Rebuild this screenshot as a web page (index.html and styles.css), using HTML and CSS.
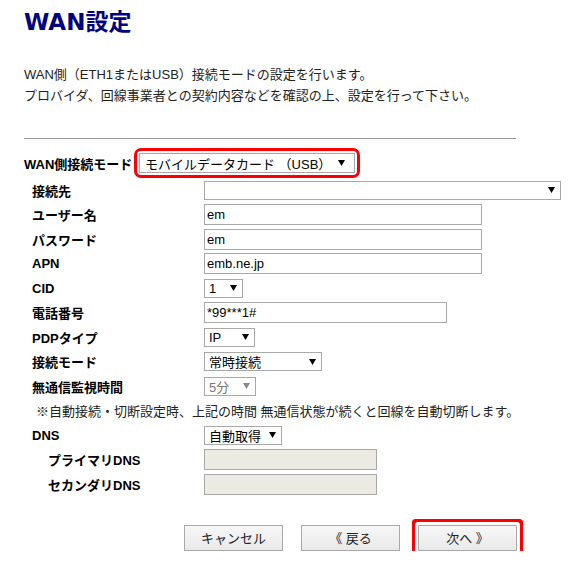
FILE: index.html
```html
<!DOCTYPE html>
<html lang="ja">

<head>
    <meta charset="UTF-8">
    <title>WAN設定</title>
    <link rel="stylesheet" href="styles.css">
</head>

<body>
    <div class="page">
        <h1 class="title">WAN設定</h1>
        <p class="lead">WAN側（ETH1またはUSB）接続モードの設定を行います。<br>プロバイダ、回線事業者との契約内容などを確認の上、設定を行って下さい。</p>
        <hr class="sep">

        <div class="mode-row">
            <span class="mode-label">WAN側接続モード</span>
            <span class="mark">
                <span class="sel sel-mode">モバイルデータカード （USB）<svg class="arr" width="7" height="6" viewBox="0 0 7 6"><path d="M0 0H7L3.5 6Z"/></svg></span>
            </span>
        </div>

        <div class="form">
            <div class="row">
                <span class="lbl">接続先</span>
                <span class="sel w-dest"><svg class="arr" width="7" height="6" viewBox="0 0 7 6"><path d="M0 0H7L3.5 6Z"/></svg></span>
            </div>
            <div class="row">
                <span class="lbl">ユーザー名</span>
                <input class="txt w-long" type="text" value="em">
            </div>
            <div class="row">
                <span class="lbl">パスワード</span>
                <input class="txt w-long" type="text" value="em">
            </div>
            <div class="row">
                <span class="lbl">APN</span>
                <input class="txt w-long" type="text" value="emb.ne.jp">
            </div>
            <div class="row">
                <span class="lbl">CID</span>
                <span class="sel w-cid">1<svg class="arr" width="7" height="6" viewBox="0 0 7 6"><path d="M0 0H7L3.5 6Z"/></svg></span>
            </div>
            <div class="row">
                <span class="lbl">電話番号</span>
                <input class="txt w-tel" type="text" value="*99***1#">
            </div>
            <div class="row">
                <span class="lbl">PDPタイプ</span>
                <span class="sel w-pdp">IP<svg class="arr" width="7" height="6" viewBox="0 0 7 6"><path d="M0 0H7L3.5 6Z"/></svg></span>
            </div>
            <div class="row">
                <span class="lbl">接続モード</span>
                <span class="sel w-conn">常時接続<svg class="arr" width="7" height="6" viewBox="0 0 7 6"><path d="M0 0H7L3.5 6Z"/></svg></span>
            </div>
            <div class="row">
                <span class="lbl">無通信監視時間</span>
                <span class="sel w-idle off">5分<svg class="arr" width="7" height="6" viewBox="0 0 7 6"><path d="M0 0H7L3.5 6Z"/></svg></span>
            </div>
            <div class="row note">※自動接続・切断設定時、上記の時間 無通信状態が続くと回線を自動切断します。</div>
            <div class="row">
                <span class="lbl">DNS</span>
                <span class="sel w-dns">自動取得<svg class="arr" width="7" height="6" viewBox="0 0 7 6"><path d="M0 0H7L3.5 6Z"/></svg></span>
            </div>
            <div class="row">
                <span class="lbl sub">プライマリDNS</span>
                <input class="txt w-ip" type="text" disabled>
            </div>
            <div class="row">
                <span class="lbl sub">セカンダリDNS</span>
                <input class="txt w-ip" type="text" disabled>
            </div>
        </div>

        <div class="buttons">
            <button class="btn">キャンセル</button>
            <button class="btn">《 戻る</button>
            <button class="btn btn-next">次へ 》</button>
        </div>
    </div>
</body>

</html>
```

FILE: styles.css
```css
* {
    margin: 0;
    padding: 0;
    box-sizing: border-box;
}

body {
    background-color: #fff;
    color: #000;
    font-family: "Liberation Sans", "Noto Sans CJK JP", sans-serif;
    font-size: 13px;
}

.page {
    width: 577px;
    padding: 8px 0 0 24px;
}

.title {
    height: 28px;
    line-height: 28px;
    font-family: "DejaVu Sans", "Noto Sans CJK JP", sans-serif;
    font-size: 23px;
    font-weight: bold;
    color: #000080;
}

.lead {
    margin-top: 28px;
    line-height: 21px;
    color: #222;
}

.sep {
    width: 492px;
    height: 1px;
    margin-top: 32px;
    border: none;
    background-color: #999;
}

.mode-row {
    display: flex;
    align-items: center;
    height: 30px;
    margin-top: 9px;
}

.mode-label {
    width: 110px;
    font-weight: bold;
}

.mark {
    display: inline-flex;
    padding: 2px;
    border: 3px solid #f00;
    border-radius: 7px;
}

.sel {
    display: flex;
    align-items: center;
    height: 19px;
    padding: 0 5px 0 4px;
    border: 1px solid #a9a9a9;
    background-color: #fff;
    white-space: nowrap;
}

.sel .arr {
    flex: none;
    margin-left: auto;
    fill: #000;
}

.sel-mode {
    width: 216px;
    height: 20px;
    padding-left: 5px;
    padding-right: 9px;
}

.sel.off {
    color: #777;
}

.sel.off .arr {
    fill: #888;
}

.form {
    display: flex;
    flex-direction: column;
}

.row {
    display: flex;
    align-items: center;
    height: 24.5px;
    padding-left: 8px;
}

.lbl {
    width: 172px;
    flex: none;
    font-weight: bold;
}

.lbl.sub {
    padding-left: 16px;
}

.note {
    padding-left: 12px;
    white-space: nowrap;
    color: #222;
}

.txt {
    height: 21px;
    padding: 0 2px;
    border: 1px solid #a9a9a9;
    font-family: "Liberation Sans", sans-serif;
    font-size: 13px;
    color: #000;
    background-color: #fff;
    outline: none;
}

.txt:disabled {
    background-color: #ebebe4;
}

.w-dest { width: 357px; }
.w-long { width: 278px; }
.w-tel { width: 243px; }
.w-cid { width: 39px; }
.w-pdp { width: 51px; }
.w-conn { width: 118px; }
.w-idle { width: 52px; }
.w-dns { width: 78px; }
.w-ip { width: 173px; }

.buttons {
    display: flex;
    align-items: center;
    gap: 18px;
    margin-top: 28px;
    padding-left: 160px;
}

.btn {
    width: 99px;
    height: 26px;
    border: 1px solid #a9a9a9;
    background: linear-gradient(#f7f7f7, #e9e9e9);
    font-family: "Liberation Sans", "Noto Sans CJK JP", sans-serif;
    font-size: 13px;
    color: #222;
}

.btn-next {
    border-radius: 1px;
    box-shadow: 0 0 0 3px #fff, 0 0 0 6px #f00;
}
```
